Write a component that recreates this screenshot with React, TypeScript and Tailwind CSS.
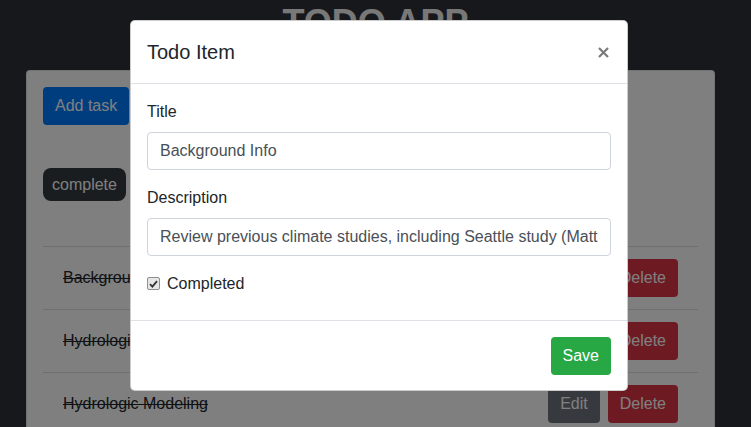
const todos = [
  { title: "Background Info" },
  { title: "Hydrologic Analysis" },
  { title: "Hydrologic Modeling" },
];

function Checkbox() {
  return (
    <span className="absolute left-0 top-[5px] flex h-[13px] w-[13px] items-center justify-center rounded-[2px] border border-[#8f8f8f] bg-[#e6e6e6]">
      <svg width="9" height="8" viewBox="0 0 9 8" fill="none">
        <path d="M1 4.2 L3.4 6.6 L8 1.2" stroke="#333" strokeWidth="1.8" />
      </svg>
    </span>
  );
}

export default function App() {
  return (
    <div className="relative h-[427px] overflow-hidden bg-[#2e3037] font-['Liberation_Sans',Arial,sans-serif] text-[#212529]">
      {/* PAGE */}
      <h1 className="pt-[1px] text-center text-[36px] font-bold leading-[44px] text-[#f0f0f0]">
        TODO APP
      </h1>

      <div className="ml-[26px] mt-[25px] w-[689px] rounded-[4px] border border-black/10 bg-white p-4">
        <button className="h-[38px] rounded-[4px] bg-[#007bff] px-3 text-base text-white">
          Add task
        </button>

        <div className="mt-[43px] flex">
          <span className="flex h-[33px] items-center rounded-lg bg-[#343a40] px-[9px] text-base text-white">
            complete
          </span>
        </div>

        <ul className="mt-[45px]">
          {todos.map((todo) => (
            <li
              key={todo.title}
              className="flex items-center justify-between border-t border-black/[.125] px-5 py-3"
            >
              <span className="text-base leading-6 line-through">{todo.title}</span>
              <div className="flex gap-2">
                <button className="h-[38px] rounded-[4px] bg-[#6c757d] px-3 text-base text-white">
                  Edit
                </button>
                <button className="h-[38px] rounded-[4px] bg-[#dc3545] px-3 text-base text-white">
                  Delete
                </button>
              </div>
            </li>
          ))}
        </ul>
      </div>

      {/* BACKDROP */}
      <div className="absolute inset-0 bg-black/50" />

      {/* MODAL */}
      <div className="absolute left-[130px] top-[20px] w-[498px] rounded-[5px] border border-black/20 bg-white">
        <div className="flex items-center justify-between border-b border-[#dee2e6] p-4">
          <h5 className="text-[20px] font-medium leading-[30px]">Todo Item</h5>
          <svg width="11" height="11" viewBox="0 0 11 11" className="mr-[2px]">
            <path d="M1 1 L10 10 M10 1 L1 10" stroke="#7a7a7a" strokeWidth="2.2" />
          </svg>
        </div>

        <div className="px-4 pb-6 pt-4">
          <label className="mb-2 block text-base leading-6">Title</label>
          <input
            readOnly
            value="Background Info"
            className="mb-4 block h-[38px] w-full rounded-[4px] border border-[#ced4da] px-3 text-base text-[#495057] outline-none"
          />

          <label className="mb-2 block text-base leading-6">Description</label>
          <input
            readOnly
            value="Review previous climate studies, including Seattle study (Matt 'Hydro' Wilson, 2008)"
            className="mb-4 block h-[38px] w-full rounded-[4px] border border-[#ced4da] px-3 text-base text-[#495057] outline-none"
          />

          <div className="relative pl-5 text-base leading-6">
            <Checkbox />
            Completed
          </div>
        </div>

        <div className="flex justify-end border-t border-[#dee2e6] px-4 pb-[15px] pt-4">
          <button className="h-[38px] rounded-[4px] bg-[#28a745] px-3 text-base text-white">
            Save
          </button>
        </div>
      </div>
    </div>
  );
}
